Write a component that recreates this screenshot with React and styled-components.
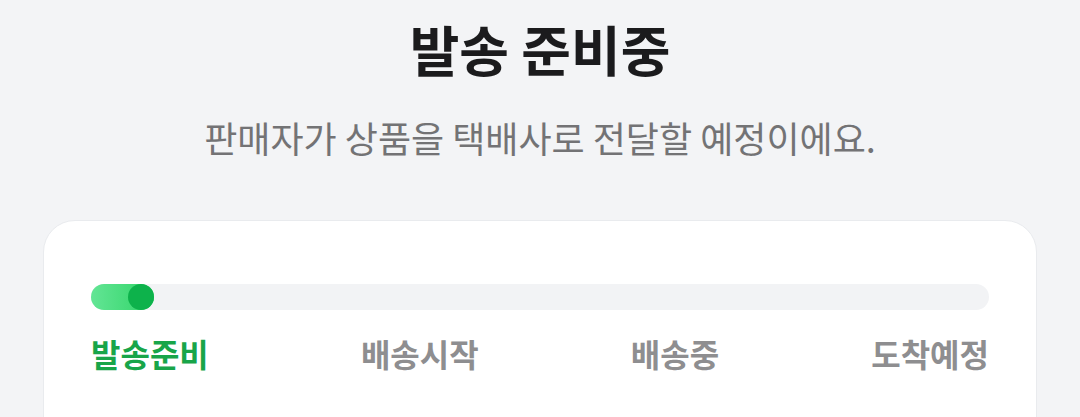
import React from "react";
import styled, { createGlobalStyle } from "styled-components";

const GlobalStyle = createGlobalStyle`
  html, body {
    margin: 0;
    padding: 0;
    background: #f3f4f6;
    font-family: "Noto Sans CJK KR", "Noto Sans", sans-serif;
  }
`;

const Page = styled.div`
  display: flex;
  flex-direction: column;
  align-items: stretch;
  padding: 22px 43px 0;
  height: 417px;
  box-sizing: border-box;
  overflow: hidden;
`;

const Header = styled.header`
  display: flex;
  flex-direction: column;
  align-items: center;
`;

const Title = styled.h1`
  margin: 0;
  font-size: 54px;
  line-height: 1;
  font-weight: 700;
  letter-spacing: 0;
  color: #1b1b1d;
`;

const Subtitle = styled.p`
  margin: 43px 0 0;
  font-size: 36px;
  line-height: 1;
  font-weight: 400;
  letter-spacing: 0;
  color: #737375;
`;

const Card = styled.section`
  margin-top: 65px;
  background: #ffffff;
  border: 1px solid #e9ebee;
  border-radius: 32px;
  padding: 63px 47px 80px;
  display: flex;
  flex-direction: column;
  gap: 27px;
`;

const Track = styled.div`
  height: 26px;
  border-radius: 13px;
  background: #f2f3f5;
`;

const Fill = styled.div`
  height: 100%;
  border-radius: 13px;
  background: linear-gradient(90deg, #63e595 0%, #2fd466 100%);
  display: flex;
  justify-content: flex-end;
`;

const Knob = styled.div`
  width: 26px;
  height: 26px;
  border-radius: 50%;
  background: #0db24b;
`;

const Steps = styled.div`
  display: flex;
  justify-content: space-between;
`;

const Step = styled.span`
  font-size: 32px;
  line-height: 1;
  font-weight: 700;
  letter-spacing: 0;
  color: ${(p) => (p.$active ? "#18a549" : "#8e8e90")};
`;

const steps = ["발송준비", "배송시작", "배송중", "도착예정"];

export default function App() {
  const progress = 63;
  return (
    <>
      <GlobalStyle />
      <Page>
        <Header>
          <Title>발송 준비중</Title>
          <Subtitle>판매자가 상품을 택배사로 전달할 예정이에요.</Subtitle>
        </Header>
        <Card>
          <Track>
            <Fill style={{ width: `${progress}px` }}>
              <Knob />
            </Fill>
          </Track>
          <Steps>
            {steps.map((s, i) => (
              <Step key={s} $active={i === 0}>
                {s}
              </Step>
            ))}
          </Steps>
        </Card>
      </Page>
    </>
  );
}
